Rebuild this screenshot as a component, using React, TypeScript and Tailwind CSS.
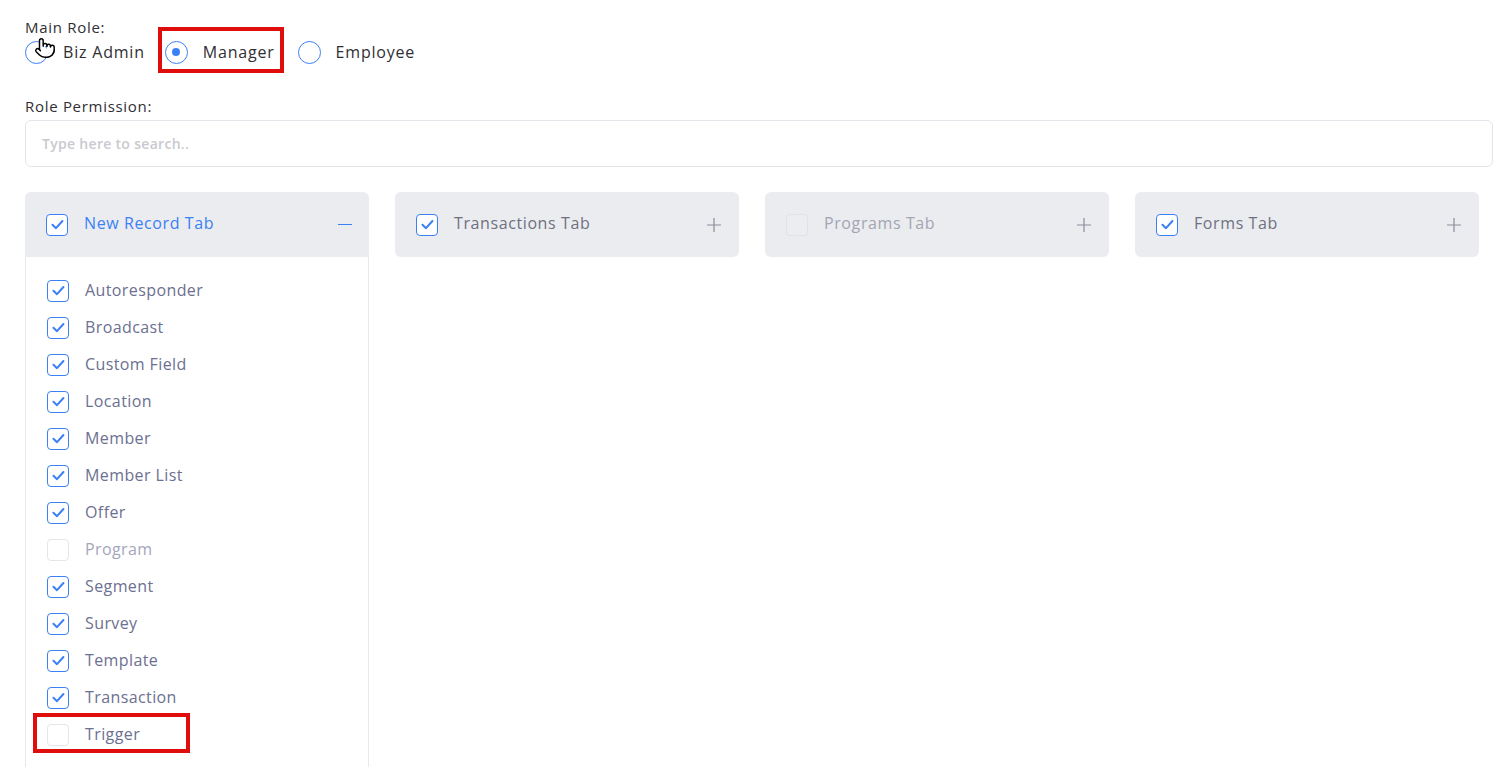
import { Pointer } from 'lucide-react';

const ITEMS: { label: string; checked: boolean }[] = [
  { label: 'Autoresponder', checked: true },
  { label: 'Broadcast', checked: true },
  { label: 'Custom Field', checked: true },
  { label: 'Location', checked: true },
  { label: 'Member', checked: true },
  { label: 'Member List', checked: true },
  { label: 'Offer', checked: true },
  { label: 'Program', checked: false },
  { label: 'Segment', checked: true },
  { label: 'Survey', checked: true },
  { label: 'Template', checked: true },
  { label: 'Transaction', checked: true },
  { label: 'Trigger', checked: false },
];

function Check({ checked }: { checked: boolean }) {
  if (!checked) {
    return <span className="w-[22px] h-[22px] rounded-[4px] border border-[#e4e6ec] bg-white shrink-0" />;
  }
  return (
    <span className="w-[22px] h-[22px] rounded-[4px] border-[1.5px] border-[#3b80f5] bg-white shrink-0 flex items-center justify-center">
      <svg width="15" height="15" viewBox="0 0 14 14" fill="none">
        <path d="M2.3 7.3 L5.6 10.4 L11.6 3.7" stroke="#3b80f5" strokeWidth="1.9" strokeLinecap="round" strokeLinejoin="round" />
      </svg>
    </span>
  );
}

function Radio({ selected }: { selected?: boolean }) {
  return (
    <span className="w-[23px] h-[23px] rounded-full border border-[#3b80f5] bg-white flex items-center justify-center shrink-0">
      {selected && <span className="w-[8px] h-[8px] rounded-full bg-[#3b80f5]" />}
    </span>
  );
}

function Plus() {
  return (
    <svg width="16" height="16" viewBox="0 0 16 16" fill="none">
      <path d="M8 1v14M1 8h14" stroke="#8b8c99" strokeWidth="1.2" />
    </svg>
  );
}

function TabCard({ title, checked, disabled }: { title: string; checked: boolean; disabled?: boolean }) {
  return (
    <div className="w-[344px] shrink-0 h-[65px] rounded-[6px] bg-[#ebecf0] flex items-center pl-[21px] pr-[17px]">
      {disabled ? (
        <span className="w-[22px] h-[22px] rounded-[4px] border border-[#e1e2e8] bg-[#ecedf1] shrink-0" />
      ) : (
        <Check checked={checked} />
      )}
      <span className={`ml-4 mb-[3px] text-[16px] font-medium tracking-[0.6px] ${disabled ? 'text-[#a3a5b3]' : 'text-[#6e717f]'}`}>{title}</span>
      <span className="ml-auto flex"><Plus /></span>
    </div>
  );
}

export default function App() {
  return (
    <div className="min-h-screen bg-white pl-[25px] pr-[5px] pt-[17px] text-[#2f2f33]" style={{ fontFamily: '"Open Sans", "Noto Sans", sans-serif' }}>
      <div className="text-[15px] leading-[20px] tracking-[0.7px]">Main Role:</div>
      <div className="flex items-center h-[30px] text-[16px] tracking-[0.8px]">
        <label className="relative flex items-center gap-[15px]">
          <Radio />
          <span>Biz Admin</span>
          <Pointer size={22} strokeWidth={1.6} className="absolute left-[9px] top-[-3px] text-black fill-white" />
        </label>
        <label className="relative flex items-center gap-[15px] ml-[20px]">
          <Radio selected />
          <span>Manager</span>
          <span className="absolute left-[-7px] right-[-9px] top-[-13px] bottom-[-9px] border-[4px] border-[#e00d0d]" />
        </label>
        <label className="flex items-center gap-[15px] ml-[23px]">
          <Radio />
          <span>Employee</span>
        </label>
      </div>

      <div className="mt-[29px] text-[15px] leading-[20px] tracking-[0.7px]">Role Permission:</div>
      <div className="mt-[4px] h-[47px] rounded-[6px] border border-[#e3e5ea] flex items-center px-4">
        <input
          placeholder="Type here to search.."
          className="w-full outline-none text-[14px] font-semibold tracking-[0.3px] placeholder:text-[#c9cacf] bg-transparent"
        />
      </div>

      <div className="mt-[25px] flex items-start gap-[26px]">
        <div className="w-[344px] shrink-0">
          <div className="h-[65px] rounded-t-[6px] bg-[#ebecf0] flex items-center pl-[21px] pr-[17px]">
            <Check checked />
            <span className="ml-4 mb-[3px] text-[16px] font-medium tracking-[0.6px] text-[#3b80f5]">New Record Tab</span>
            <span className="ml-auto w-[14px] h-[1.5px] bg-[#3b80f5]" />
          </div>
          <div className="border-x border-[#e8e9ee] pt-[15px] pb-[14px] pl-[21px]">
            {ITEMS.map(it => (
              <div key={it.label} className="relative h-[37px] flex items-center gap-4">
                <Check checked={it.checked} />
                <span className={`mb-[1px] text-[16px] tracking-[0.4px] ${it.label === 'Program' ? 'text-[#a4a6bb]' : 'text-[#6c7091]'}`}>{it.label}</span>
                {it.label === 'Trigger' && (
                  <span className="absolute left-[-14px] w-[157px] top-[-3px] h-[40px] border-[4px] border-[#e00d0d]" />
                )}
              </div>
            ))}
          </div>
        </div>
        <TabCard title="Transactions Tab" checked />
        <TabCard title="Programs Tab" checked={false} disabled />
        <TabCard title="Forms Tab" checked />
      </div>
    </div>
  );
}
